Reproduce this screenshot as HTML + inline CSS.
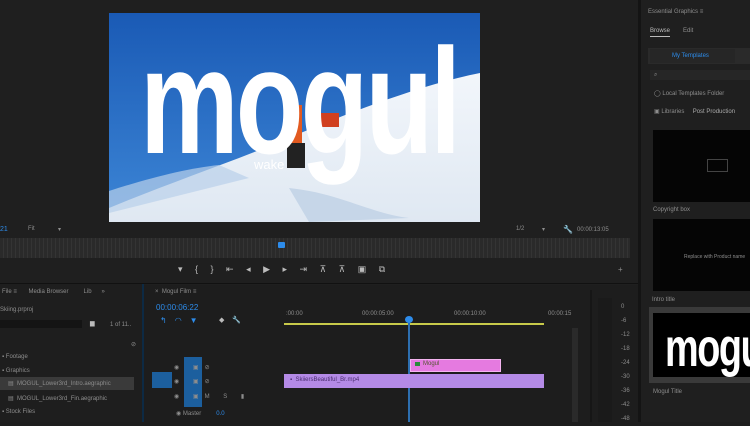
<!DOCTYPE html><html><head><style>
*{margin:0;padding:0;box-sizing:border-box}
body{width:750px;height:422px;background:#1d1d1d;position:relative;overflow:hidden;font-family:"Liberation Sans",sans-serif;color:#8a8a8a;font-size:6px}
.a{position:absolute}
.t{position:absolute;white-space:nowrap;font-size:6px;color:#8d8d8d}
.blue{color:#2d8ceb}
</style></head><body>
<div class="a" style="left:0;top:0;width:640px;height:285px;background:#1f1f1f"></div>
<div class="a" style="left:109px;top:13px;width:371px;height:209px;overflow:hidden;background:#1b5fb8">
<svg width="371" height="209" style="position:absolute;left:0;top:0">
<defs><linearGradient id="sky" x1="0" y1="0" x2="0" y2="1"><stop offset="0" stop-color="#1a5ab5"/><stop offset="1" stop-color="#3d86d6"/></linearGradient>
<linearGradient id="sn" x1="0" y1="0" x2="0" y2="1"><stop offset="0" stop-color="#f2f6fb"/><stop offset="1" stop-color="#dfe8f2"/></linearGradient></defs>
<rect width="371" height="209" fill="url(#sky)"/>
<path d="M0 195 C60 170 120 150 180 125 C250 95 320 70 371 60 L371 209 L0 209Z" fill="url(#sn)"/>
<path d="M0 178 C40 165 80 155 110 152 L140 165 L0 200Z" fill="#b9d0ea" opacity=".7"/>
<path d="M180 175 C230 180 260 200 300 205 L200 209Z" fill="#c6d6e8"/>
<rect x="175" y="92" width="18" height="40" fill="#e25a20"/>
<rect x="205" y="100" width="25" height="14" fill="#d04020"/>
<rect x="178" y="130" width="18" height="25" fill="#222"/>
</svg>
<div class="a" style="left:31px;top:13px;font-family:'Liberation Sans',sans-serif;font-weight:bold;font-size:150px;color:#fff;transform:scaleX(.74);transform-origin:0 0;letter-spacing:-4px;line-height:1">mogul</div>
<div class="a" style="left:145px;top:144px;color:#fff;font-size:13px">wake</div>
</div>
<div class="t blue" style="left:0;top:226px;font-size:7px">21</div>
<div class="t" style="left:28px;top:226px">Fit</div>
<div class="t" style="left:58px;top:226px">▾</div>
<div class="t" style="left:516px;top:226px">1/2</div>
<div class="t" style="left:542px;top:226px">▾</div>
<div class="t" style="left:563px;top:225px;font-size:8px">🔧</div>
<div class="t" style="left:577px;top:227px">00:00:13:05</div>
<div class="a" style="left:0;top:238px;width:630px;height:20px;background:repeating-linear-gradient(90deg,#2a2a2a 0 3px,#343434 3px 4px)"></div>
<div class="a" style="left:278px;top:242px;width:7px;height:6px;background:#2d8ceb;border-radius:1px"></div>
<div class="t" style="left:178px;top:264px;font-size:9px;color:#bbb;letter-spacing:12.5px">▾{}⇤◂▶▸⇥⊼⊼▣⧉</div>
<div class="t" style="left:618px;top:265px;font-size:8px">+</div>
<div class="a" style="left:0;top:283px;width:640px;height:1px;background:#111"></div>
<div class="a" style="left:0;top:284px;width:142px;height:138px;background:#1e1e1e"></div>
<div class="t" style="left:2px;top:289px">File ≡ &nbsp;&nbsp;&nbsp;&nbsp;&nbsp; Media Browser &nbsp;&nbsp;&nbsp;&nbsp;&nbsp;&nbsp;&nbsp; Lib &nbsp;&nbsp;&nbsp;&nbsp; »</div>
<div class="t" style="left:0;top:307px">Skiing.prproj</div>
<div class="a" style="left:0;top:320px;width:82px;height:8px;background:#141414"></div>
<div class="t" style="left:90px;top:320px;color:#bbb">▆</div>
<div class="t" style="left:110px;top:322px">1 of 11..</div>
<div class="t" style="left:131px;top:341px">⊘</div>
<div class="t" style="left:2px;top:354px">▪ Footage</div>
<div class="t" style="left:2px;top:368px">▪ Graphics</div>
<div class="a" style="left:0;top:377px;width:134px;height:13px;background:#3a3a3a"></div>
<div class="t" style="left:8px;top:380px">▤ &nbsp;MOGUL_Lower3rd_Intro.aegraphic</div>
<div class="t" style="left:8px;top:395px">▤ &nbsp;MOGUL_Lower3rd_Fin.aegraphic</div>
<div class="t" style="left:2px;top:409px">▪ Stock Files</div>
<div class="a" style="left:142px;top:284px;width:2px;height:138px;background:#0d2a44"></div>
<div class="t" style="left:155px;top:289px">× &nbsp;Mogul Film ≡</div>
<div class="t blue" style="left:156px;top:303px;font-size:8px">00:00:06:22</div>
<div class="t blue" style="left:160px;top:316px;font-size:8px;letter-spacing:8px">↰◠▼</div>
<div class="t" style="left:219px;top:316px;font-size:7px;color:#bbb">◆ &nbsp;&nbsp; 🔧</div>
<div class="t" style="left:286px;top:311px">:00:00</div>
<div class="t" style="left:362px;top:311px">00:00:05:00</div>
<div class="t" style="left:454px;top:311px">00:00:10:00</div>
<div class="t" style="left:548px;top:311px">00:00:15</div>
<div class="a" style="left:284px;top:323px;width:260px;height:2px;background:#c7c94a"></div>
<div class="a" style="left:184px;top:357px;width:18px;height:50px;background:#1c5f9e"></div>
<div class="a" style="left:152px;top:372px;width:20px;height:16px;background:#1c5f9e"></div>
<div class="t" style="left:174px;top:364px;font-size:6px;letter-spacing:6px">◉ ▣⊘</div>
<div class="t" style="left:174px;top:378px;font-size:6px;letter-spacing:6px">◉ ▣⊘</div>
<div class="t" style="left:174px;top:393px;font-size:6px;letter-spacing:6px">◉ ▣M S ▮</div>
<div class="t" style="left:176px;top:410px">◉ Master &nbsp;&nbsp;&nbsp;&nbsp;&nbsp;&nbsp;&nbsp; <span class="blue">0.0</span></div>
<div class="a" style="left:408px;top:318px;width:2px;height:104px;background:#2d6fb0"></div>
<div class="a" style="left:405px;top:316px;width:8px;height:7px;border-radius:50%;background:#2d8ceb"></div>
<div class="a" style="left:410px;top:359px;width:91px;height:13px;background:#e57ae0;border:1px solid #f4b5f0"></div>
<div class="a" style="left:415px;top:362px;width:5px;height:4px;background:#2a8a3a"></div>
<div class="t" style="left:423px;top:361px;color:#553">Mogul</div>
<div class="a" style="left:284px;top:374px;width:260px;height:14px;background:#b48ae6"></div>
<div class="t" style="left:290px;top:377px;color:#4b2d70">▪ &nbsp;SkiiersBeautiful_Br.mp4</div>
<div class="a" style="left:572px;top:328px;width:6px;height:94px;background:#2a2a2a"></div>
<div class="a" style="left:590px;top:290px;width:2px;height:132px;background:#161616"></div>
<div class="a" style="left:598px;top:298px;width:14px;height:124px;background:#1a1a1a"></div>
<div class="t" style="left:621px;top:300px;line-height:14px">0<br>-6<br>-12<br>-18<br>-24<br>-30<br>-36<br>-42<br>-48</div>
<div class="a" style="left:638px;top:0;width:3px;height:422px;background:#141414"></div>
<div class="a" style="left:641px;top:0;width:109px;height:422px;background:#1f1f1f"></div>
<div class="t" style="left:648px;top:9px">Essential Graphics ≡</div>
<div class="t" style="left:650px;top:28px;color:#bbb">Browse</div>
<div class="a" style="left:650px;top:36px;width:20px;height:1px;background:#bbb"></div>
<div class="t" style="left:683px;top:28px">Edit</div>
<div class="a" style="left:648px;top:48px;width:102px;height:16px;background:#2a2a2a"></div>
<div class="a" style="left:650px;top:49px;width:85px;height:14px;background:#262626"></div>
<div class="t blue" style="left:672px;top:53px">My Templates</div>
<div class="a" style="left:650px;top:70px;width:100px;height:10px;background:#262626"></div>
<div class="t" style="left:654px;top:72px">⌕</div>
<div class="t" style="left:654px;top:90px">◯ Local Templates Folder</div>
<div class="t" style="left:654px;top:108px">▣ Libraries &nbsp;&nbsp;&nbsp; <span style="color:#aaa">Post Production</span></div>
<div class="a" style="left:653px;top:130px;width:97px;height:72px;background:#050505"></div>
<div class="a" style="left:707px;top:159px;width:21px;height:13px;border:1px solid #444"></div>
<div class="t" style="left:653px;top:207px">Copyright box</div>
<div class="a" style="left:653px;top:219px;width:97px;height:72px;background:#050505"></div>
<div class="t" style="left:684px;top:254px;font-size:5px">Replace with Product name</div>
<div class="t" style="left:652px;top:297px">Intro title</div>
<div class="a" style="left:649px;top:307px;width:101px;height:76px;background:#3a3a3a"></div>
<div class="a" style="left:653px;top:313px;width:97px;height:64px;background:#000;overflow:hidden">
<div class="a" style="left:12px;top:8px;font-weight:bold;font-size:54px;color:#fff;transform:scaleX(.7);transform-origin:0 0;letter-spacing:-2px;line-height:1">mogul</div></div>
<div class="t" style="left:653px;top:389px">Mogul Title</div>
</body></html>
